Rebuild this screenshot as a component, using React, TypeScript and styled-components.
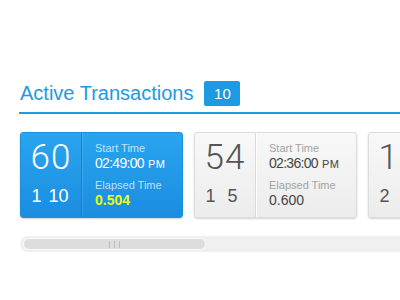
import styled, { createGlobalStyle } from 'styled-components';

const GlobalStyle = createGlobalStyle`
    html, body {
        margin: 0;
        padding: 0;
        background: #ffffff;
        font-family: "Liberation Sans", Arial, sans-serif;
    }
`

const Page = styled.div`
    width: 400px;
    height: 300px;
    overflow: hidden;
    padding: 81px 0 0 20px;
    box-sizing: border-box;
`

const Header = styled.div`
    display: flex;
    align-items: center;
    gap: 11px;
    height: 25px;
    padding-bottom: 6px;
    margin-left: -1px;
    padding-left: 1px;
    border-bottom: 2px solid #1d9ae2;
`

const Title = styled.h2`
    margin: 0;
    font-size: 20px;
    line-height: 25px;
    font-weight: normal;
    color: #1d9ae2;
    white-space: nowrap;
`

const Badge = styled.span`
    display: flex;
    align-items: center;
    justify-content: center;
    width: 36px;
    height: 25px;
    border-radius: 2px;
    background: #1d9ae2;
    color: #ffffff;
    font-size: 15px;
`

const CardRow = styled.div`
    display: flex;
    gap: 11px;
    margin-top: 18px;
`

const Card = styled.div<{ $active?: boolean }>`
    flex: 0 0 163px;
    height: 86px;
    display: flex;
    border-radius: 3px;
    box-sizing: border-box;
    background: ${p => p.$active
        ? 'linear-gradient(to bottom, #2aa5ef, #1b8ddf)'
        : 'linear-gradient(to bottom, #f8f8f8, #ececec)'};
    border: 1px solid ${p => p.$active ? '#1b8fe0' : '#dcdcdc'};
    box-shadow: 0 1px 2px rgba(0, 0, 0, 0.18);
    color: ${p => p.$active ? '#ffffff' : '#555555'};
`

const Counts = styled.div<{ $active?: boolean }>`
    width: 61px;
    display: flex;
    flex-direction: column;
    align-items: center;
    padding-top: 7px;
    box-sizing: border-box;
    border-right: 1px solid ${p => p.$active ? '#1780cc' : '#dadada'};
    box-shadow: 1px 0 0 ${p => p.$active ? 'rgba(255,255,255,0.12)' : '#ffffff'};
`

const BigNumber = styled.div`
    font-family: Roboto, "Liberation Sans", sans-serif;
    font-weight: 300;
    font-size: 35px;
    line-height: 35px;
    letter-spacing: 1px;
    white-space: nowrap;
`

const SmallCounts = styled.div`
    display: grid;
    grid-template-columns: 22px 22px;
    margin-top: 11px;
    padding-right: 7px;
    font-size: 18px;
    line-height: 20px;
    text-align: center;
    white-space: nowrap;
`

const Details = styled.div`
    flex: 1;
    padding: 9px 0 0 13px;
    white-space: nowrap;
`

const Label = styled.div<{ $active?: boolean }>`
    font-size: 11px;
    line-height: 13px;
    color: ${p => p.$active ? 'rgba(255,255,255,0.72)' : '#a3a3a3'};
`

const Time = styled.div<{ $active?: boolean }>`
    font-size: 14px;
    line-height: 16px;
    letter-spacing: -0.7px;
    margin-bottom: 7px;
    color: ${p => p.$active ? '#ffffff' : '#444444'};
`

const Meridiem = styled.span`
    font-size: 11px;
    letter-spacing: 0.6px;
    margin-left: 4px;
`

const Elapsed = styled.div<{ $active?: boolean }>`
    font-size: 14px;
    line-height: 17px;
    font-weight: ${p => p.$active ? 'bold' : 'normal'};
    color: ${p => p.$active ? '#e4ff1a' : '#444444'};
`

const Track = styled.div`
    margin-top: 18px;
    height: 16px;
    background: #f0f0f0;
    border-radius: 8px 0 0 8px;
    padding: 3px 0 0 4px;
    box-sizing: border-box;
`

const Thumb = styled.div`
    width: 181px;
    height: 10px;
    border-radius: 5px;
    background: #dddddd;
    box-shadow: 0 0 0 1px #f8f8f8;
    display: flex;
    justify-content: center;
    align-items: center;
    gap: 4px;
`

const Grip = styled.span`
    width: 1px;
    height: 7px;
    background: #bdbdbd;
`

const transactions = [
    { total: '60', a: '1', b: '10', start: '02:49:00', elapsed: '0.504', active: true },
    { total: '54', a: '1', b: '5', start: '02:36:00', elapsed: '0.600', active: false },
    { total: '18', a: '2', b: '1', start: '02:31:00', elapsed: '0.712', active: false },
]

export default function App() {
    return (
        <>
            <GlobalStyle />
            <Page>
                <Header>
                    <Title>Active Transactions</Title>
                    <Badge>10</Badge>
                </Header>
                <CardRow>
                    {transactions.map((t, i) => (
                        <Card key={i} $active={t.active}>
                            <Counts $active={t.active}>
                                <BigNumber>{t.total}</BigNumber>
                                <SmallCounts>
                                    <span>{t.a}</span>
                                    <span>{t.b}</span>
                                </SmallCounts>
                            </Counts>
                            <Details>
                                <Label $active={t.active}>Start Time</Label>
                                <Time $active={t.active}>{t.start}<Meridiem>PM</Meridiem></Time>
                                <Label $active={t.active}>Elapsed Time</Label>
                                <Elapsed $active={t.active}>{t.elapsed}</Elapsed>
                            </Details>
                        </Card>
                    ))}
                </CardRow>
                <Track>
                    <Thumb>
                        <Grip />
                        <Grip />
                        <Grip />
                    </Thumb>
                </Track>
            </Page>
        </>
    )
}
